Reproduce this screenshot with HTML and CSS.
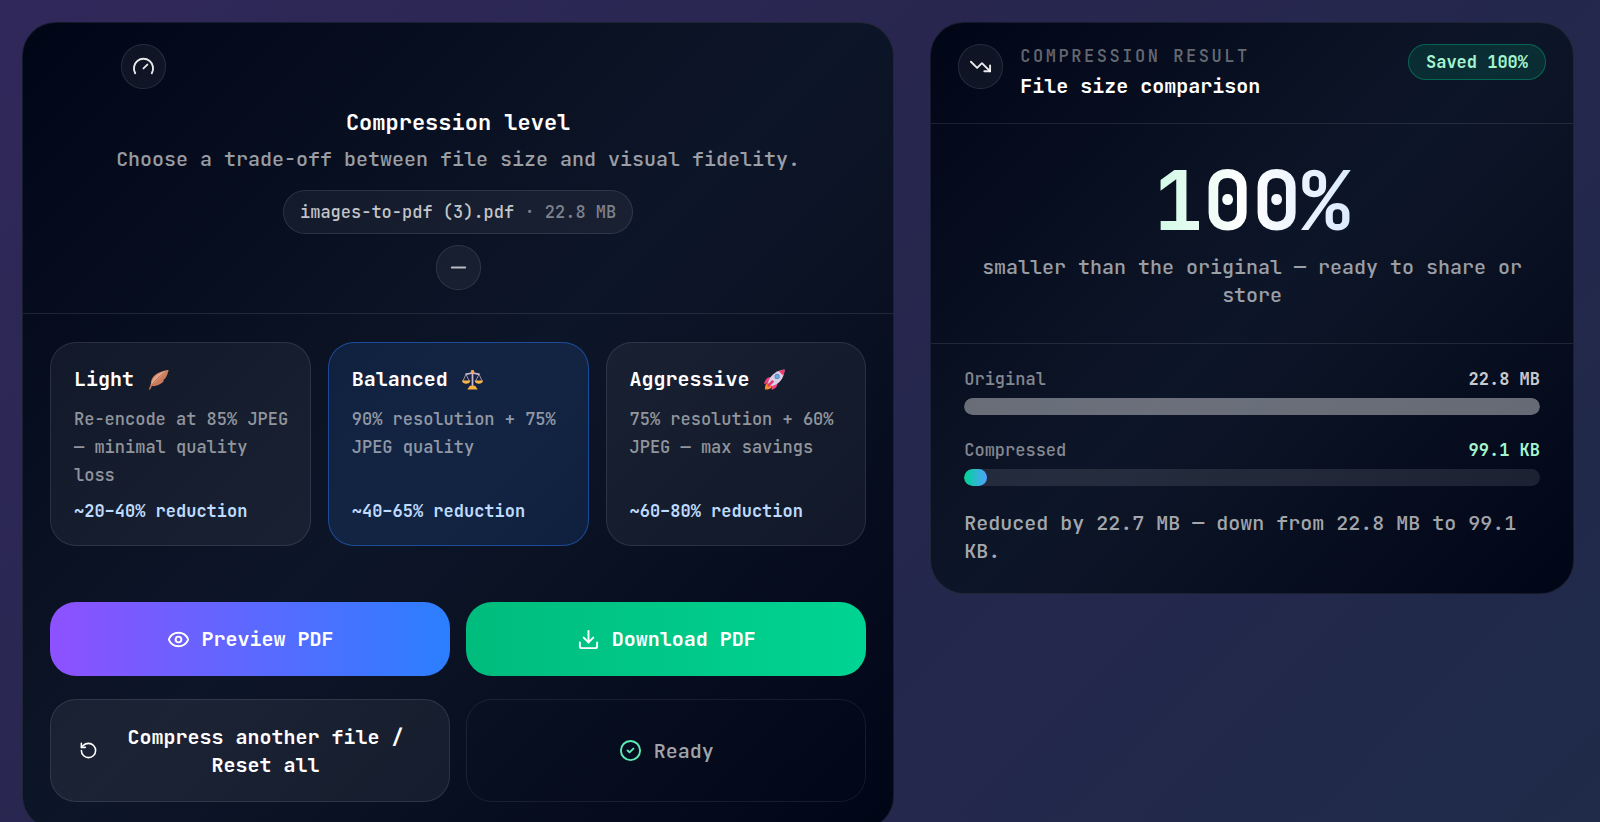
FILE: index.html
```html
<!DOCTYPE html>
<html lang="en">
<head>
  <meta charset="UTF-8" />
  <meta name="viewport" content="width=device-width, initial-scale=1.0"/>
  <title>Compress PDF</title>
  <link rel="stylesheet" href="styles.css">
</head>
<body>

  <main class="layout">
    <section class="panel">
      <div class="level-header">
        <div class="level-intro">
          <div class="icon-box">
            <svg class="icon" viewBox="0 0 24 24"><path d="m12 14 4-4"/><path d="M3.34 19a10 10 0 1 1 17.32 0"/></svg>
          </div>
          <h2 class="level-title">Compression level</h2>
          <p class="level-text">Choose a trade-off between file size and visual fidelity.</p>
        </div>
        <div class="file-pill">images-to-pdf (3).pdf <span>· 22.8 MB</span></div>
        <button class="collapse-btn" aria-label="Collapse">
          <svg class="icon" viewBox="0 0 24 24"><path d="M5 12h14"/></svg>
        </button>
      </div>

      <div class="level-body">
        <div class="options">
          <button class="option" aria-pressed="false">
            <span class="option-title">Light
              <svg class="emoji" viewBox="0 0 24 24">
                <path d="M1 23.500C2 20 3 18 3.500 16C3.500 9 9 3 23.500 1C22 8 20 11 17.500 12.500L18 14C14.500 18 9 20 4.500 19.500L2.500 23.500Z" fill="#c97b5c"/>
                <path d="M3.500 17C5 9 11 4 23.500 1C17 7 11 12 4 19Z" fill="#e3a583"/>
                <path d="M1.500 23C6 15 13 8 22 2" fill="none" stroke="#a9644e"/>
              </svg>
            </span>
            <span class="option-text">Re-encode at 85% JPEG — minimal quality loss</span>
            <span class="option-saving">~20–40% reduction</span>
          </button>
          <button class="option selected" aria-pressed="true">
            <span class="option-title">Balanced
              <svg class="emoji" viewBox="0 0 24 24">
                <path d="M12 1v19M4 5.500c3 1 5-1 8-1s5 2 8 1" fill="none" stroke="#cbb6cf" stroke-width="2"/>
                <path d="M4.500 6L1 14M4.500 6L8.500 14M19.500 6L15.500 14M19.500 6L23 14" fill="none" stroke="#b99fb0"/>
                <circle cx="12" cy="3" r="2" fill="#f4a83a"/>
                <path d="M0 13h9.500c-.5 5-9 5-9.500 0ZM14.500 13H24c-.5 5-9 5-9.500 0Z" fill="#f9b544"/>
                <path d="M9 19h6l3 4.500H6Z" fill="#f9b23c"/>
              </svg>
            </span>
            <span class="option-text">90% resolution + 75% JPEG quality</span>
            <span class="option-saving">~40–65% reduction</span>
          </button>
          <button class="option" aria-pressed="false">
            <span class="option-title">Aggressive
              <svg class="emoji" viewBox="0 0 24 24">
                <path d="M1 23.500C1 19 2 16 5 16l4 4c-1 3-4 3.500-8 3.500Z" fill="#f68a2d"/>
                <path d="M8 9C3 9 1 13 0 17l6-1ZM15 16c1 4-2 6-6 8l-1-6Z" fill="#ef3f83"/>
                <path d="M4.500 16C6 9 12 2 23.500.5C23 11 17 18 8 19.500Z" fill="#d9cfe3"/>
                <path d="M17 2.500C19 1.500 21 1 23.500.5C23.500 3 23 5 22 7.500Z" fill="#f8336b"/>
                <path d="m4.500 19.500 6-6" stroke="#e83675" stroke-width="3"/>
                <circle cx="15" cy="8.500" r="3" fill="#7484b5"/>
                <circle cx="15" cy="8.500" r="1.800" fill="#4db6ef"/>
              </svg>
            </span>
            <span class="option-text">75% resolution + 60% JPEG — max savings</span>
            <span class="option-saving">~60–80% reduction</span>
          </button>
        </div>

        <div class="actions">
          <button class="action preview">
            <svg class="icon" viewBox="0 0 24 24"><path d="M2.062 12.348a1 1 0 0 1 0-.696 10.750 10.750 0 0 1 19.876 0 1 1 0 0 1 0 .696 10.750 10.750 0 0 1-19.876 0"/><circle cx="12" cy="12" r="3"/></svg>
            Preview PDF
          </button>
          <button class="action download">
            <svg class="icon" viewBox="0 0 24 24"><path d="M12 15V3"/><path d="M21 15v4a2 2 0 0 1-2 2H5a2 2 0 0 1-2-2v-4"/><path d="m7 10 5 5 5-5"/></svg>
            Download PDF
          </button>
          <button class="action reset">
            <svg class="icon icon-small" viewBox="0 0 24 24"><path d="M3 12a9 9 0 1 0 9-9 9.750 9.750 0 0 0-6.740 2.740L3 8"/><path d="M3 3v5h5"/></svg>
            <span>Compress another file / Reset all</span>
          </button>
          <div class="action status" role="status">
            <svg class="icon" viewBox="0 0 24 24"><circle cx="12" cy="12" r="10"/><path d="m9 12 2 2 4-4"/></svg>
            Ready
          </div>
        </div>
      </div>
    </section>

    <section class="panel">
      <div class="result-header">
        <div class="icon-box">
          <svg class="icon" viewBox="0 0 24 24"><path d="M16 17h6v-6"/><path d="m22 17-8.500-8.500-5 5L2 7"/></svg>
        </div>
        <div class="result-heading">
          <p class="eyebrow">Compression result</p>
          <h2 class="result-title">File size comparison</h2>
        </div>
        <span class="saved-badge">Saved 100%</span>
      </div>

      <div class="result-main">
        <div class="percent">100%</div>
        <p>smaller than the original — ready to share or store</p>
      </div>

      <div class="result-sizes">
        <div class="size-row">
          <div class="size-label"><span>Original</span><strong>22.8 MB</strong></div>
          <div class="bar"><div class="bar-fill original" style="width: 100%"></div></div>
        </div>
        <div class="size-row">
          <div class="size-label"><span>Compressed</span><strong class="green">99.1 KB</strong></div>
          <div class="bar"><div class="bar-fill compressed" style="width: 4%"></div></div>
        </div>
        <p class="summary">Reduced by 22.7 MB — down from 22.8 MB to 99.1 KB.</p>
      </div>
    </section>
  </main>

</body>
</html>
```

FILE: styles.css
```css
* {
  box-sizing: border-box;
}

body {
  margin: 0;
  min-height: 100vh;
  font-family: 'JetBrains Mono', 'DejaVu Sans Mono', monospace;
  font-size: 20px;
  font-weight: 500;
  line-height: 28px;
  color: #fff;
  background: linear-gradient(135deg, #30285a 0%, #28264f 40%, #23284c 70%, #1f2b49 100%);
}

h2, p {
  margin: 0;
}

button {
  font: inherit;
  color: inherit;
  cursor: pointer;
}

.layout {
  display: grid;
  grid-template-columns: 1.355fr 1fr;
  align-items: start;
  gap: 36px;
  padding: 22px 26px 22px 22px;
}

.panel {
  border: 1px solid rgba(255, 255, 255, 0.08);
  border-radius: 34px;
  background: linear-gradient(135deg, #010617, #0d1628 50%, #010617);
  background-origin: border-box;
  overflow: hidden;
}

.icon {
  width: 23px;
  height: 23px;
  flex-shrink: 0;
  fill: none;
  stroke: currentColor;
  stroke-width: 2;
  stroke-linecap: round;
  stroke-linejoin: round;
}

.icon-small {
  width: 19px;
  height: 19px;
}

.icon-box,
.collapse-btn {
  display: flex;
  align-items: center;
  justify-content: center;
  flex-shrink: 0;
  width: 45px;
  height: 45px;
  padding: 0;
  border: 1px solid rgba(255, 255, 255, 0.1);
  border-radius: 22px;
  background: rgba(255, 255, 255, 0.05);
  color: rgba(255, 255, 255, 0.9);
}

/* compression level */

.level-header {
  display: flex;
  flex-direction: column;
  align-items: center;
  padding: 21px 28px 23px;
  border-bottom: 1px solid rgba(255, 255, 255, 0.1);
}

.level-intro {
  display: flex;
  flex-direction: column;
  align-items: center;
  width: 100%;
  max-width: 674px;
}

.level-intro .icon-box {
  align-self: flex-start;
}

.level-title {
  margin: 18px 0 6px;
  font-size: 22px;
  line-height: 32px;
}

.level-text {
  white-space: nowrap;
  color: rgba(255, 255, 255, 0.6);
}

.file-pill {
  margin: 17px 0 11px;
  padding: 8px 16px;
  border: 1px solid rgba(255, 255, 255, 0.1);
  border-radius: 22px;
  background: rgba(255, 255, 255, 0.05);
  font-size: 17px;
  line-height: 26px;
  color: rgba(255, 255, 255, 0.75);
}

.file-pill span {
  color: rgba(255, 255, 255, 0.45);
}

.collapse-btn {
  color: rgba(255, 255, 255, 0.7);
}

.level-body {
  padding: 28px 27px 27px;
}

.options {
  display: grid;
  grid-template-columns: repeat(3, 1fr);
  gap: 17px;
}

.option {
  display: flex;
  flex-direction: column;
  padding: 22px 18px 22px 23px;
  border: 1px solid rgba(255, 255, 255, 0.1);
  border-radius: 26px;
  background: rgba(255, 255, 255, 0.05);
  text-align: left;
}

.option.selected {
  border-color: rgba(43, 127, 255, 0.45);
  background: rgba(60, 130, 235, 0.14);
}

.option-title {
  display: flex;
  align-items: center;
  gap: 14px;
  font-weight: bold;
}

.emoji {
  width: 21px;
  height: 21px;
}

.option-text {
  margin: 12px 0 10px;
  font-size: 17px;
  color: rgba(255, 255, 255, 0.55);
}

.option-saving {
  margin-top: auto;
  font-size: 17px;
  line-height: 24px;
  font-weight: 600;
  color: #bedbff;
}

.actions {
  display: grid;
  grid-template-columns: 1fr 1fr;
  gap: 23px 16px;
  margin-top: 56px;
}

.action {
  display: flex;
  align-items: center;
  justify-content: center;
  gap: 12px;
  padding: 22px 28px;
  border: 1px solid rgba(255, 255, 255, 0.1);
  border-radius: 26px;
  font-weight: bold;
}

.preview,
.download {
  padding: 23px 28px;
  border: none;
}

.preview {
  background: linear-gradient(to right, #8e51ff, #2b7fff);
}

.download {
  background: linear-gradient(to right, #00bc7d, #00d492);
}

.reset {
  min-height: 103px;
  background: rgba(255, 255, 255, 0.06);
}

.status {
  border-color: rgba(255, 255, 255, 0.08);
  font-weight: 500;
  color: rgba(255, 255, 255, 0.65);
}

.status .icon {
  color: #5ee9b5;
}

/* result */

.result-header {
  display: flex;
  align-items: flex-start;
  padding: 21px 27px 23px;
  border-bottom: 1px solid rgba(255, 255, 255, 0.1);
}

.result-heading {
  flex: 1;
  margin-left: 17px;
}

.eyebrow {
  margin-bottom: 4px;
  font-size: 17px;
  line-height: 24px;
  letter-spacing: 0.15em;
  text-transform: uppercase;
  color: rgba(255, 255, 255, 0.4);
}

.result-title {
  font-size: 20px;
}

.saved-badge {
  padding: 5px 17px;
  border: 1px solid rgba(0, 188, 125, 0.4);
  border-radius: 18px;
  background: rgba(0, 188, 125, 0.15);
  font-size: 17px;
  line-height: 24px;
  font-weight: bold;
  color: #a4f4cf;
}

.result-main {
  padding: 35px 28px 34px;
  border-bottom: 1px solid rgba(255, 255, 255, 0.1);
  text-align: center;
  color: rgba(255, 255, 255, 0.6);
}

.percent {
  width: fit-content;
  margin: 0 auto 10px;
  font-size: 82px;
  line-height: 84px;
  font-weight: bold;
  color: transparent;
  background: linear-gradient(to right, #d0fae5, #fff 45%, #dbeafe);
  background-clip: text;
  -webkit-background-clip: text;
}

.result-sizes {
  padding: 23px 33px 28px;
}

.size-row {
  margin-bottom: 23px;
}

.size-label {
  display: flex;
  justify-content: space-between;
  margin-bottom: 7px;
  font-size: 17px;
  line-height: 24px;
  color: rgba(255, 255, 255, 0.5);
}

.size-label strong {
  color: rgba(255, 255, 255, 0.8);
}

.size-label .green {
  color: #a4f4cf;
}

.bar {
  height: 17px;
  border-radius: 9px;
  background: rgba(255, 255, 255, 0.1);
  overflow: hidden;
}

.bar-fill {
  height: 100%;
  border-radius: 9px;
}

.original {
  background: rgba(255, 255, 255, 0.32);
}

.compressed {
  background: linear-gradient(to right, #00d492, #51a2ff);
}

.summary {
  color: rgba(255, 255, 255, 0.65);
}
```
